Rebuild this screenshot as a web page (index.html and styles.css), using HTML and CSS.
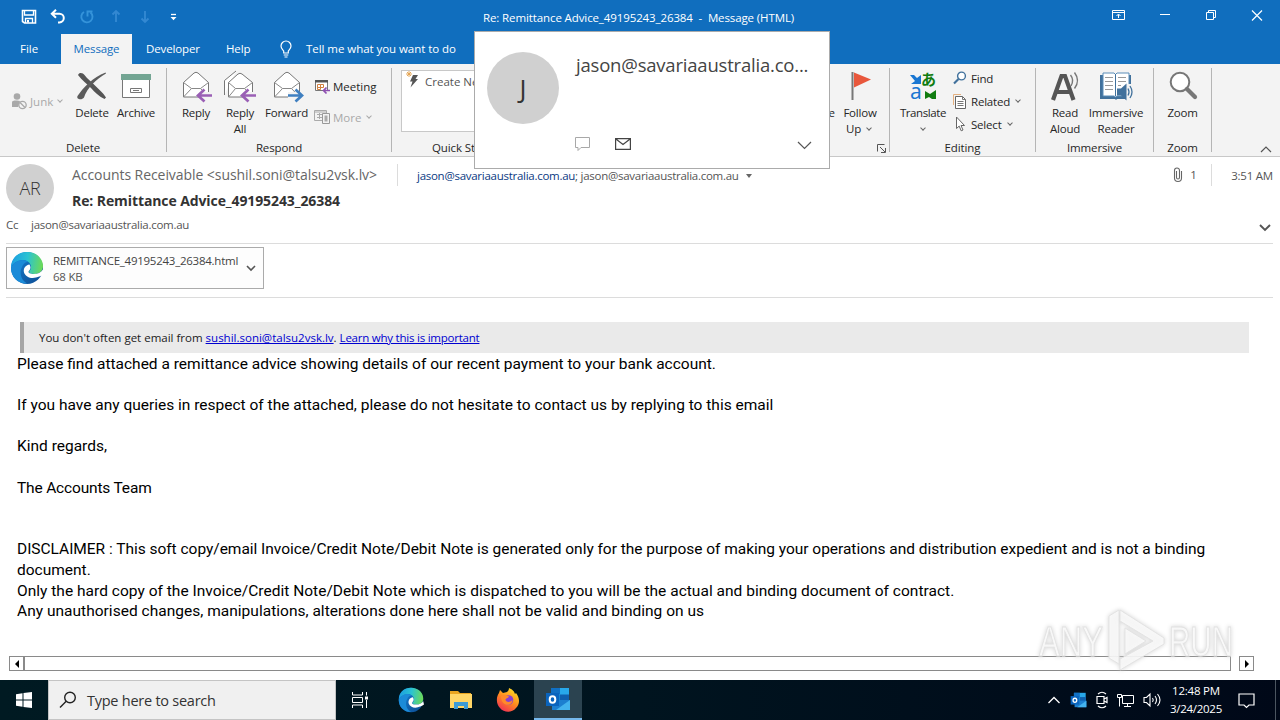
FILE: index.html
```html
<!DOCTYPE html>
<html>
<head>
    <meta charset="UTF-8">
    <title>Re: Remittance Advice_49195243_26384 - Message (HTML)</title>
    <link rel="stylesheet" href="styles.css">
</head>
<body>
    <!-- Title bar -->
    <header class="titlebar">
        <div class="quick">
            <svg width="16" height="16" viewBox="0 0 16 16"><path d="M1.500 1.500h13V14H3.500L1.500 12.500z" fill="none" stroke="#fff" stroke-width="1.600"/><path d="M3.500 1.500V6h9V1.500M4.500 14V9.500h7V14" fill="none" stroke="#fff" stroke-width="1.300"/><path d="M6 11h2v2.500H6z" fill="#fff"/></svg>
            <svg width="16" height="16" viewBox="0 0 16 16"><path d="M6 .800 1.800 4.800l4.200 4M2.300 4.800H9.500a4.200 4.200 0 0 1 0 8.600H8" fill="none" stroke="#fff" stroke-width="2"/></svg>
            <svg width="16" height="16" viewBox="0 0 16 16"><path d="M5 3A5.600 5.600 0 1 0 11.500 3.500M8.500 7.500V2.500h5" fill="none" stroke="#3593da" stroke-width="1.900"/></svg>
            <svg width="16" height="16" viewBox="0 0 16 16"><path d="M8 13V2M4.500 5.500 8 2l3.500 3.500" fill="none" stroke="#3388d2" stroke-width="1.900"/></svg>
            <svg width="16" height="16" viewBox="0 0 16 16"><path d="M8 2v11M4.500 9.500 8 13l3.500-3.500" fill="none" stroke="#3388d2" stroke-width="1.900"/></svg>
            <svg width="16" height="16" viewBox="0 0 16 16"><path d="M5 5.500h5" stroke="#fff" stroke-width="1.300"/><path d="M4.500 8h6l-3 3.200z" fill="#fff"/></svg>
        </div>
        <div class="title">Re: Remittance Advice_49195243_26384&nbsp; -&nbsp; Message (HTML)</div>
        <div class="controls">
            <svg width="14" height="12" viewBox="0 0 14 12"><path d="M.5 .5h12v9H.5zM.5 2.500h12M6.500 8V4.500M4.500 6l2-2 2 2" fill="none" stroke="#fff"/></svg>
            <svg width="12" height="12" viewBox="0 0 12 12"><path d="M1 4.500h10" stroke="#fff"/></svg>
            <svg width="12" height="12" viewBox="0 0 12 12"><path d="M1.500 2.500h7v7h-7zM3.500 2.500v-2h7v7h-2" fill="none" stroke="#fff"/></svg>
            <svg width="12" height="12" viewBox="0 0 12 12"><path d="m1 .500 10 10M11 .500 1 10.500" stroke="#fff" stroke-width="1.200"/></svg>
        </div>
    </header>

    <nav class="tabs">
        <span class="tab tab-file">File</span>
        <span class="tab tab-active">Message</span>
        <span class="tab tab-dev">Developer</span>
        <span class="tab tab-help">Help</span>
        <svg width="14" height="18" viewBox="0 0 14 18"><path d="M4.700 13v-2C3.500 9.500 2 8.500 2 6a5 5 0 0 1 10 0c0 2.500-1.500 3.500-2.700 5v2zM4.700 15h4.600M5.500 17h3" fill="none" stroke="#fff" stroke-width="1.200"/></svg>
        <span class="tell">Tell me what you want to do</span>
    </nav>

    <!-- Ribbon -->
    <section class="ribbon">
        <div class="group group-delete">
            <div class="tools">
                <div class="junk">
                    <svg width="17" height="17" viewBox="0 0 17 17"><circle cx="6" cy="3.500" r="3.300" fill="#a9a9a9"/><path d="M1 14V9.500C1 8 2 7.500 6 7.500l3 .5-2 6z" fill="#a9a9a9"/><circle cx="11.500" cy="12" r="3.700" fill="#f3f3f3" stroke="#a9a9a9" stroke-width="1.300"/><path d="m9 9.500 5 5" stroke="#a9a9a9" stroke-width="1.300"/></svg>
                    <span>Junk</span><i class="caret pale"></i>
                </div>
                <div class="big w-delete">
                    <svg width="32" height="32" viewBox="0 0 32 32"><path d="M2 5c1-3 5-2.500 6.500 0 3 4 6 6 10 10 4 4 8.500 7.500 11.500 12.500l-1.500 1.500c-6-3-9.500-6.500-13.500-11C11 14 6 10.500 2 5z" fill="#555"/><path d="M30 3.500C20.500 9 11 18 8 27.500 6 30.500 0 29.500 1.500 26 7 18 17 7 29.500 2.500z" fill="#5c5c5c"/></svg>
                    <span>Delete</span>
                </div>
                <div class="big w-archive">
                    <svg width="32" height="32" viewBox="0 0 32 32"><path d="M2.500 9.500h27v18h-27z" fill="#fff" stroke="#777"/><path d="M1 4h30v6H1z" fill="#73a593"/><path d="M10.500 18.500h11v4h-11zM13 20.500h6" fill="none" stroke="#777"/></svg>
                    <span>Archive</span>
                </div>
            </div>
            <div class="group-name">Delete</div>
        </div>

        <div class="group group-respond">
            <div class="tools">
                <div class="big w-reply">
                    <svg width="32" height="32" viewBox="0 0 32 32"><path d="M3.500 12.500 14 3q2-1.500 4 0l10.500 9.500V27h-25z" fill="#fff" stroke="#777"/><path d="m3.500 12.500 8 6h9l8-6M3.500 27l8-8.500M28.500 27l-8-8.500" fill="none" stroke="#888"/><path d="M33 22v6H19v-6z" fill="#f3f3f3"/><path d="M32 25.500H19M24.500 19.500l-6.500 6 6.500 6" fill="none" stroke="#9a5fb5" stroke-width="2.700"/></svg>
                    <span>Reply</span>
                </div>
                <div class="big w-replyall">
                    <svg width="32" height="32" viewBox="0 0 32 32"><path d="M.5 25V10.500L12 1M4.500 12.500 14 4q2-1.500 4 0l10.500 8.500V27h-24z" fill="#fff" stroke="#777"/><path d="m4.500 12.500 7 6h9l8-6M4.500 27l7-8.500M28.500 27l-8-8.500" fill="none" stroke="#888"/><path d="M33 22v6H19v-6z" fill="#f3f3f3"/><path d="M32 25.500H19M24.500 19.500l-6.500 6 6.500 6" fill="none" stroke="#9a5fb5" stroke-width="2.700"/></svg>
                    <span>Reply<br>All</span>
                </div>
                <div class="big w-forward">
                    <svg width="32" height="32" viewBox="0 0 32 32"><path d="M3.500 12.500 14 3q2-1.500 4 0l10.500 9.500V27h-25z" fill="#fff" stroke="#777"/><path d="m3.500 12.500 8 6h9l8-6M3.500 27l8-8.500M28.500 27l-8-8.500" fill="none" stroke="#888"/><path d="M17 22h14v6H17z" fill="#f3f3f3"/><path d="M17 25.500h13M24.500 19.500l6.500 6-6.500 6" fill="none" stroke="#3f7fc0" stroke-width="2.700"/></svg>
                    <span>Forward</span>
                </div>
                <div class="smalls respond-smalls">
                    <div class="small">
                        <svg width="16" height="16" viewBox="0 0 16 16"><path d="M1.500 3.500h12v9h-12z" fill="#fff" stroke="#777"/><path d="M1 2h13v2.500H1z" fill="#555"/><path d="M3.500 6.500h3v3h-3zM6.500 6.500h3v3h-3zM3.500 9.500h3v2h-3z" fill="none" stroke="#d07f3e"/><path d="M16 12.500H10M12.500 9.500l-3 3 3 3" fill="none" stroke="#8d4fb0" stroke-width="1.700"/></svg>
                        <span>Meeting</span>
                    </div>
                    <div class="small off">
                        <svg width="16" height="16" viewBox="0 0 16 16"><path d="M.5 1.500h12v10H.5zM.5 3h12M3 5.500h5M3 8.500h5M5.500 4v6" fill="none" stroke="#aaa"/><path d="M8.500 4.500h7v10h-7z" fill="#f3f3f3" stroke="#999"/><path d="M10.500 6.500h3v6h-3z" fill="#aaa"/></svg>
                        <span>More</span><i class="caret pale"></i>
                    </div>
                </div>
            </div>
            <div class="group-name">Respond</div>
        </div>

        <div class="group group-steps">
            <div class="steps">
                <svg width="16" height="18" viewBox="0 0 16 18"><path d="M7 4h5L9.500 8h2.500L4.500 16.500l2-6H4z" fill="#555"/><path d="M3 0v6M0 3h6M1 1l4 4M5 1 1 5" stroke="#e3a04c" stroke-width=".9"/></svg>
                <span>Create New</span>
            </div>
            <div class="group-name">Quick Steps</div>
        </div>

        <div class="group group-tags">
            <div class="tools">
                <div class="big w-categorize"><span>Categorize</span></div>
                <div class="big w-follow">
                    <svg width="32" height="32" viewBox="0 0 32 32"><path d="M8.500 2v28" stroke="#777" stroke-width="2"/><path d="M10 2.500 27 9.500 10 17.500z" fill="#e8573c"/></svg>
                    <span>Follow<br>Up <i class="caret"></i></span>
                </div>
            </div>
            <svg class="launcher" width="9" height="9" viewBox="0 0 9 9"><path d="M.5 7.500v-7h7M3 3l5 5M8.500 4v4.500H4" fill="none" stroke="#555"/></svg>
        </div>

        <div class="group group-editing">
            <div class="tools">
                <div class="big w-translate">
                    <svg width="32" height="32" viewBox="0 0 32 32"><path d="M3 5h4l3 3 4-3v9H4l4-3z" fill="#1976d2"/><path d="M29 20v9h-4l-3-2-4 2v-8l5 3z" fill="#107c10"/><text x="3" y="29" class="glyph-a">a</text><text x="14" y="15" class="glyph-jp">あ</text></svg>
                    <span>Translate<br><i class="caret"></i></span>
                </div>
                <div class="smalls editing-smalls">
                    <div class="small">
                        <svg width="16" height="16" viewBox="0 0 16 16"><circle cx="9.500" cy="6" r="3.900" fill="#fff" stroke="#41719c" stroke-width="1.400"/><path d="m6.500 9-4.500 4.500" stroke="#41719c" stroke-width="2.200"/></svg>
                        <span>Find</span>
                    </div>
                    <div class="small">
                        <svg width="16" height="16" viewBox="0 0 16 16"><path d="M1.500 12V1.500H9" fill="none" stroke="#e5b180"/><path d="M3.500 3.500h7l3 3v9h-10z" fill="#fff" stroke="#666"/><path d="M10.500 3.500v3h3M5.500 8.500h6M5.500 10.500h6M5.500 12.500h6" fill="none" stroke="#777"/></svg>
                        <span>Related</span><i class="caret"></i>
                    </div>
                    <div class="small">
                        <svg width="16" height="16" viewBox="0 0 16 16"><path d="M4.500 1v11.500l2.700-2.400 2 4.700 1.800-.8-2-4.500h3.500z" fill="#fff" stroke="#666"/></svg>
                        <span>Select</span><i class="caret"></i>
                    </div>
                </div>
            </div>
            <div class="group-name">Editing</div>
        </div>

        <div class="group group-immersive">
            <div class="tools">
                <div class="big w-aloud">
                    <svg width="32" height="32" viewBox="0 0 32 32"><path d="m4 30 8.500-24h3.500l8.500 24M8 22h13" fill="none" stroke="#555" stroke-width="4.200"/><path d="M21.500 5q4 5 .5 11M25.500 2.500q6 8 0 16" fill="none" stroke="#777" stroke-width="1.400"/></svg>
                    <span>Read<br>Aloud</span>
                </div>
                <div class="big w-reader">
                    <svg width="34" height="32" viewBox="0 0 34 32"><path d="M1 5h31v24H18l-1 1-1-1H1z" fill="#41719c"/><path d="M4 3h11l1.500 1.500L18 3h12v23H18l-1.500 1L15 26H4z" fill="#fff" stroke="#5b8db8"/><path d="M16.500 4v22" stroke="#41719c"/><path d="M6 7.500h8M6 11.500h8M6 15.500h8M6 19.500h8M19 7.500h8M19 11.500h8M19 15.500h3" stroke="#999"/><path d="M27 14h7v16h-7z" fill="#f3f3f3"/><path d="M18 18.500h4l5.500-5v17l-5.500-5h-4z" fill="#41719c"/><path d="M29 18.500q2 3.500 0 7M31 16q4 6 0 12" fill="none" stroke="#41719c" stroke-width="1.300"/></svg>
                    <span>Immersive<br>Reader</span>
                </div>
            </div>
            <div class="group-name">Immersive</div>
        </div>

        <div class="group group-zoom">
            <div class="tools">
                <div class="big w-zoom">
                    <svg width="32" height="32" viewBox="0 0 32 32"><circle cx="13" cy="12" r="9.300" fill="#fff" stroke="#777" stroke-width="2"/><path d="m20 19 8 8" stroke="#777" stroke-width="4.200" stroke-linecap="round"/></svg>
                    <span>Zoom</span>
                </div>
            </div>
            <div class="group-name">Zoom</div>
        </div>
        <svg class="collapse" width="12" height="7" viewBox="0 0 12 7"><path d="m1 6 5-5 5 5" fill="none" stroke="#555" stroke-width="1.200"/></svg>
    </section>

    <!-- Message header -->
    <section class="head">
        <div class="head-row">
            <div class="avatar">AR</div>
            <div class="who">
                <div class="from-line">
                    <span class="sender">Accounts Receivable &lt;sushil.soni@talsu2vsk.lv&gt;</span>
                    <span class="to"><b>jason@savariaaustralia.com.au</b>; jason@savariaaustralia.com.au<i class="drop"></i></span>
                </div>
                <div class="subject">Re: Remittance Advice_49195243_26384</div>
            </div>
            <div class="meta">
                <svg width="10" height="16" viewBox="0 0 10 16"><path d="M3.500 4v6.500a1.500 1.500 0 0 0 3 0V3.500a2.500 2.500 0 0 0-5 0V11a3.500 3.500 0 0 0 7 0V4" fill="none" stroke="#666" stroke-width="1.100"/></svg>
                <span class="count">1</span>
                <span class="when">3:51 AM</span>
            </div>
        </div>
        <div class="cc">
            <span class="cc-label">Cc</span><span>jason@savariaaustralia.com.au</span>
            <svg width="12" height="8" viewBox="0 0 12 8"><path d="m1 1 5 5 5-5" fill="none" stroke="#555" stroke-width="1.900"/></svg>
        </div>
    </section>

    <section class="attachments">
        <div class="file">
            <svg width="34" height="34" viewBox="0 0 34 34">
                <defs>
                    <linearGradient id="top" x1="0" y1=".4" x2="1" y2=".5"><stop offset="0" stop-color="#1b9de2"/><stop offset=".5" stop-color="#2bc3d2"/><stop offset="1" stop-color="#6ddb55"/></linearGradient>
                    <linearGradient id="low" x1="0" y1="0" x2="1" y2="1"><stop offset="0" stop-color="#1686d9"/><stop offset="1" stop-color="#0c4a91"/></linearGradient>
                    <g id="edge">
                        <circle cx="17" cy="17" r="16" fill="url(#low)"/>
                        <path d="M1 17C1 7 8 1 17 1c10 0 16 7 16 14 0 6-5 8-9 8-3 0-5-1-5-2s2-2 2-5c0-4-4-7-8-7C7 9 2 13 1 17z" fill="url(#top)"/>
                        <path d="M12 16c-2 3-3 12 5 16.500C8 33 1 26 1 17c2-5 7-8 12-8 2 0 4 1 5 2-3 0-5 2-6 5z" fill="#1b8bd8"/>
                        <path d="M19.500 13.500c-4 .5-6.500 4-5.500 8 1.500 4.500 7 6.500 12 5 2.500-.7 4.500-1.500 5.500-2l2.500-1.500-1-4.500c-2 3-5.500 4.500-9 4.500-4 0-5.500-1-5.500-2.200 0-1 2-2 2-4.300 0-1-.4-2-1-3z" class="edge-cut"/>
                    </g>
                </defs>
                <use href="#edge"/>
            </svg>
            <div class="file-text"><span class="file-name">REMITTANCE_49195243_26384.html</span><span class="file-size">68 KB</span></div>
            <svg width="10" height="7" viewBox="0 0 10 7"><path d="m1 1 4 4 4-4" fill="none" stroke="#555" stroke-width="1.600"/></svg>
        </div>
    </section>

    <!-- Message body -->
    <main class="mail">
        <div class="notice">You don't often get email from <a>sushil.soni@talsu2vsk.lv</a>. <a class="learn">Learn why this is important</a></div>
        <div class="text">
            Please find attached a remittance advice showing details of our recent payment to your bank account.<br><br>
            If you have any queries in respect of the attached, please do not hesitate to contact us by replying to this email<br><br>
            Kind regards,<br><br>
            <span class="team">The Accounts Team</span><br><br><br>
            <span class="disclaimer">DISCLAIMER : This soft copy/email Invoice/Credit Note/Debit Note is generated only for the purpose of making your operations and distribution expedient and is not a binding</span><br>
            document.<br>
            <span class="terms">Only the hard copy of the Invoice/Credit Note/Debit Note which is dispatched to you will be the actual and binding document of contract.<br>
            Any unauthorised changes, manipulations, alterations done here shall not be valid and binding on us</span>
        </div>
        <div class="scroll">
            <span class="scroll-btn"><i class="left"></i></span>
            <span class="scroll-track"></span>
            <span class="scroll-btn scroll-end"><i class="right"></i></span>
        </div>
    </main>

    <!-- Taskbar -->
    <footer class="taskbar">
        <svg class="start" width="16" height="16" viewBox="0 0 16 16"><path d="m0 2.200 6.500-.9v6.200H0zM7.500 1.100 16 0v7.500H7.500zM0 8.500h6.500v6.200L0 13.800zM7.500 8.500H16V16l-8.500-1.100z" fill="#fff"/></svg>
        <div class="search">
            <svg width="18" height="18" viewBox="0 0 18 18"><circle cx="11" cy="6.500" r="5.300" fill="none" stroke="#222" stroke-width="1.400"/><path d="m7.200 10.300-6.200 6.200" stroke="#222" stroke-width="1.400"/></svg>
            <span>Type here to search</span>
        </div>
        <div class="apps">
            <div class="app app-view"><svg width="18" height="16" viewBox="0 0 18 16"><path d="M1.500 0v3M11.500 0v3M1.500 3h10M1.500 5.500h10v5h-10zM1.500 13h10M1.500 13v3M11.500 13v3M15.500 0v3.500M15.500 8v8" fill="none" stroke="#fff"/><path d="M14 4.500h3v3h-3z" fill="#fff"/></svg></div>
            <div class="app app-edge"><svg width="26" height="26" viewBox="0 0 34 34"><use href="#edge"/></svg></div>
            <div class="app app-files"><svg width="22" height="20" viewBox="0 0 22 20"><path d="M0 1h8l2 2h11v4H0z" fill="#e9a520"/><path d="M0 4h22v14H0z" fill="#ffd667"/><path d="M4 19v-7h14v7h-4v-3H8v3z" fill="#3c9bd6"/></svg></div>
            <div class="app"><svg width="24" height="24" viewBox="0 0 24 24">
                <defs><linearGradient id="fox" x1=".8" y1="0" x2=".2" y2="1"><stop offset="0" stop-color="#ffe226"/><stop offset=".5" stop-color="#ff8a1f"/><stop offset="1" stop-color="#f0295a"/></linearGradient></defs>
                <path d="M3 5 4 2l3 3 4-1c1-1 2-2 2-4 4 2 5 3 6 6l1-1c4 5 4 11 0 15-4 5-12 5-16 0C0 16 0 9 3 5z" fill="url(#fox)"/><circle cx="12.500" cy="12" r="4.800" fill="#8a3fd0"/><path d="M5 8c3-2 6-.5 8 .5-1 2-3.500 1.500-3.500 3.500 1 2.500 4.500 2.500 7 0 0 7-11.500 7-11.500-4z" fill="#ff8a2a"/></svg></div>
            <div class="app app-on"><svg width="26" height="24" viewBox="0 0 26 24">
                <g id="outlook"><path d="M6 1h18v13H6z" fill="#28a8ea"/><path d="M6 1h9v6.500H6z" fill="#1070c4"/><path d="M15 7.500h9V14h-9z" fill="#0f5fae"/><path d="M6 7.500h9V14H6z" fill="#1482cf"/><path d="M7 13h18v10H7z" fill="#1c7fd0"/><path d="m25 13-14 10h14z" fill="#43b3ee"/><path d="M1 6h13v13H1z" fill="#0a64bd"/><ellipse cx="7.500" cy="12.500" rx="2.800" ry="3.200" fill="none" stroke="#fff" stroke-width="2"/></g></svg></div>
        </div>
        <div class="tray">
            <svg width="14" height="8" viewBox="0 0 14 8"><path d="m1.500 7 5.500-5.500L12.500 7" fill="none" stroke="#fff" stroke-width="1.300"/></svg>
            <svg width="17" height="16" viewBox="0 0 26 24"><use href="#outlook"/></svg>
            <svg width="12" height="18" viewBox="0 0 12 18"><path d="M1 5.500h7v7H1zM8 8l3-1.500v5L8 10M2 3q4-3.500 8 0M2 15q4 3.500 8 0" fill="none" stroke="#fff" stroke-width="1.200"/></svg>
            <svg width="17" height="15" viewBox="0 0 17 15"><path d="M5.500 2.500h11v8h-11zM.5 1.500h4v3h-4zM2.500 4.500v9M7 13.500h7M10.500 10.500v3" fill="none" stroke="#fff"/></svg>
            <svg width="18" height="14" viewBox="0 0 18 14"><path d="M1 4.500h2.500L7 1v12L3.500 9.500H1zM9.500 5q1.500 2 0 4M12 3q3 4 0 8M14.500 1q5 6 0 12" fill="none" stroke="#fff" stroke-width="1.100"/></svg>
        </div>
        <div class="clock"><span>12:48 PM</span><span class="date">3/24/2025</span></div>
        <svg class="bell" width="17" height="16" viewBox="0 0 17 16"><path d="M1 1h15v11h-5l-2.500 2.500L6 12H1z" fill="none" stroke="#fff" stroke-width="1.200"/></svg>
        <i class="peek"></i>
    </footer>

    <!-- Contact card over the ribbon -->
    <aside class="card">
        <div class="card-top">
            <div class="card-avatar">J</div>
            <div class="card-name">jason@savariaaustralia.co...</div>
        </div>
        <div class="card-actions">
            <svg width="15" height="14" viewBox="0 0 15 14"><path d="M.5.5h14v10H6l-3 3v-3H.5z" fill="none" stroke="#a8a8a8"/></svg>
            <svg width="16" height="12" viewBox="0 0 16 12"><path d="M.6.6h14.800v10.800H.6zM.6.8 8 6.500 15.400.8" fill="none" stroke="#444" stroke-width="1.200"/></svg>
            <svg class="card-more" width="15" height="9" viewBox="0 0 15 9"><path d="m1 1 6.500 6.500L14 1" fill="none" stroke="#555" stroke-width="1.200"/></svg>
        </div>
    </aside>

    <svg class="watermark" width="204" height="66" viewBox="0 0 204 66">
        <text x="3" y="49" textLength="64" lengthAdjust="spacingAndGlyphs">ANY</text>
        <path d="M73 9v42l10 6V3z"/>
        <path d="M84 3 128 31v6L84 63V52l33-18-33-20z"/>
        <path d="M89 21v26l21-13z"/>
        <text x="133" y="49" textLength="64" lengthAdjust="spacingAndGlyphs">RUN</text>
    </svg>
</body>
</html>
```

FILE: styles.css
```css
* {
    box-sizing: border-box;
}
body {
    margin: 0;
    width: 1280px;
    height: 720px;
    overflow: hidden;
    position: relative;
    display: flex;
    flex-direction: column;
    background-color: #fff;
    color: #262626;
    font-family: "Open Sans", "Noto Sans", sans-serif;
    font-size: 11.5px;
    letter-spacing: -0.22px;
}
svg {
    display: block;
    flex: none;
    overflow: visible;
}

/* title bar and tabs */
.titlebar {
    height: 34px;
    flex: none;
    display: flex;
    background-color: #106ebe;
    color: #fff;
}
.quick {
    display: flex;
    gap: 13px;
    padding: 9px 0 0 21px;
    width: 483px;
}
.title {
    width: 629px;
    padding-top: 9px;
    line-height: 18px;
    letter-spacing: -0.11px;
    white-space: nowrap;
}
.controls {
    display: flex;
    padding: 10px 0 0 0;
    gap: 34px;
}
.controls svg:first-child {
    margin-right: -1px;
}
.tabs {
    height: 30px;
    flex: none;
    display: flex;
    align-items: center;
    background-color: #106ebe;
    color: #fff;
    white-space: nowrap;
}
.tab {
    line-height: 30px;
    letter-spacing: -0.14px;
}
.tab-file {
    width: 61px;
    padding-left: 20px;
    letter-spacing: 0;
}
.tab-active {
    width: 71px;
    background-color: #f3f3f3;
    color: #106ebe;
    text-align: center;
}
.tab-dev {
    width: 94px;
    padding-left: 14px;
}
.tab-help {
    width: 53px;
}
.tell {
    padding: 0 0 1px 7px;
    letter-spacing: -0.05px;
}
.tabs svg {
    margin-right: 6px;
}

/* ribbon */
.ribbon {
    height: 93px;
    flex: none;
    display: flex;
    background-color: #f3f3f3;
    border-bottom: 1px solid #c8c8c8;
    padding: 4px 0;
}
.group {
    height: 84px;
    display: flex;
    flex-direction: column;
    justify-content: space-between;
    border-right: 1px solid #b5b5b5;
}
.group-delete { width: 167px; }
.group-respond { width: 225px; }
.group-steps { width: 225px; }
.group-tags {
    width: 273px;
    align-items: flex-end;
}
.group-editing { width: 146px; }
.group-immersive { width: 118px; }
.group-zoom { width: 58px; }
.tools {
    display: flex;
}
.group-name {
    line-height: 16px;
    margin-bottom: -4px;
    text-align: center;
    letter-spacing: -0.12px;
}
.group-steps .group-name {
    text-align: left;
    padding-left: 40px;
}
.big {
    display: flex;
    flex-direction: column;
    align-items: center;
    padding-top: 2px;
    gap: 3px;
    line-height: 16px;
    text-align: center;
    white-space: nowrap;
}
.w-delete { width: 46px; }
.w-archive { width: 42px; }
.w-reply { width: 44px; margin-left: 7px; }
.w-replyall { width: 44px; }
.w-forward { width: 49px; }
.w-categorize {
    width: 57px;
    padding-top: 37px;
}
.w-follow { width: 48px; margin-right: 5px; }
.w-translate { width: 56px; margin-left: 5px; letter-spacing: -0.4px; }
.w-aloud { width: 48px; margin-left: 5px; }
.w-reader { width: 54px; }
.w-zoom { width: 57px; }
.junk {
    width: 69px;
    padding: 24px 0 0 11px;
    height: 42px;
    display: flex;
    align-items: center;
    gap: 2px;
    color: #a9a9a9;
    letter-spacing: 0;
}
.caret {
    display: inline-block;
    width: 4px;
    height: 4px;
    border: solid #666;
    border-width: 0 1px 1px 0;
    transform: rotate(45deg);
    margin: 0 3px 3px 3px;
    flex: none;
}
.pale {
    border-color: #a9a9a9;
}
.smalls {
    display: flex;
    flex-direction: column;
}
.respond-smalls {
    padding: 10px 0 0 3px;
    gap: 15px;
    letter-spacing: 0;
}
.editing-smalls {
    padding: 2px 0 0 1px;
    gap: 7px;
    letter-spacing: -0.2px;
}
.small {
    display: flex;
    align-items: center;
    gap: 3px;
    height: 16px;
}
.off {
    color: #a9a9a9;
}
.steps {
    height: 62px;
    margin: 2px 0 0 9px;
    padding: 0 0 0 4px;
    display: flex;
    gap: 3px;
    background-color: #fff;
    border: 1px solid #c8c8c8;
    color: #555;
    line-height: 22px;
    letter-spacing: 0;
}
.launcher {
    margin: 0 3px -1px 0;
}
.glyph-a {
    font: 21px "Noto Sans", sans-serif;
    fill: #1976d2;
}
.glyph-jp {
    font: bold 15px "Noto Sans CJK JP", sans-serif;
    fill: #107c10;
}
.collapse {
    margin: 78px 8px 0 auto;
}

/* message header */
.head {
    height: 87px;
    flex: none;
    margin: 0 7px 0 6px;
    padding-top: 7px;
    border-bottom: 1px solid #dcdcdc;
    color: #555;
}
.head-row {
    display: flex;
}
.avatar {
    width: 48px;
    height: 48px;
    border-radius: 50%;
    background-color: #d0d0d0;
    color: #333;
    font-size: 18px;
    font-weight: 300;
    line-height: 48px;
    text-align: center;
}
.who {
    flex: 1;
    padding-left: 18px;
}
.from-line {
    display: flex;
    height: 22px;
    line-height: 22px;
}
.sender {
    width: 326px;
    font-size: 14px;
    letter-spacing: -0.065px;
    border-right: 1px solid #dcdcdc;
    color: #666;
}
.to {
    padding: 2px 0 0 19px;
    line-height: 20px;
    letter-spacing: -0.27px;
    white-space: nowrap;
}
.to b {
    font-weight: normal;
    color: #0b3a82;
}
.drop {
    display: inline-block;
    margin: 0 0 2px 7px;
    border: 3px solid transparent;
    border-top: 4px solid #666;
    border-bottom: 0;
}
.subject {
    font-size: 14px;
    font-weight: bold;
    line-height: 20px;
    padding-top: 5px;
    letter-spacing: -0.095px;
    color: #333;
}
.meta {
    display: flex;
    align-items: center;
    height: 22px;
}
.count {
    width: 29px;
    padding-left: 7px;
    line-height: 22px;
    border-right: 1px solid #dcdcdc;
}
.when {
    padding-left: 19px;
}
.cc {
    display: flex;
    align-items: center;
    height: 22px;
    margin-top: 1px;
    letter-spacing: -0.27px;
}
.cc-label {
    width: 25px;
}
.cc svg {
    margin: 7px 2px 0 auto;
}

/* attachment */
.attachments {
    height: 54px;
    flex: none;
    margin: 0 7px 0 6px;
    padding-top: 3px;
    border-bottom: 1px solid #dcdcdc;
}
.file {
    width: 258px;
    height: 42px;
    display: flex;
    align-items: center;
    border: 1px solid #ababab;
    background-color: #fdfdfd;
    padding-left: 3px;
}
.file-text {
    display: flex;
    flex-direction: column;
    width: 201px;
    padding: 2px 0 0 9px;
    margin-right: 1px;
    line-height: 16px;
    color: #444;
    letter-spacing: -0.25px;
    white-space: nowrap;
}
.file-size {
    color: #555;
}
.edge-cut {
    fill: #fff;
}

/* mail body */
.mail {
    height: 382px;
    flex: none;
    padding: 24px 0 0 17px;
    color: #000;
}
.notice {
    width: 1229px;
    height: 31px;
    margin-left: 3px;
    padding-left: 15px;
    line-height: 32px;
    border-left: 4px solid #a6a6a6;
    background-color: #eaeaea;
    color: #212121;
    letter-spacing: 0;
}
.notice a {
    color: #0000d0;
    text-decoration: underline;
}
.notice .learn {
    letter-spacing: -0.23px;
}
.text {
    height: 303px;
    padding-top: 1px;
    font-family: Roboto, sans-serif;
    font-size: 15.5px;
    line-height: 20.6px;
    letter-spacing: 0;
    white-space: nowrap;
}
.team {
    letter-spacing: -0.17px;
}
.disclaimer {
    letter-spacing: -0.026px;
}
.terms {
    letter-spacing: 0.02px;
}
.scroll {
    display: flex;
    height: 15px;
    margin-left: -8px;
}
.scroll-btn {
    width: 15px;
    display: flex;
    align-items: center;
    justify-content: center;
    border: 1px solid #8a8a8a;
}
.scroll-track {
    width: 1207px;
    border: 1px solid #8a8a8a;
}
.scroll-end {
    margin-left: 8px;
}
.left, .right {
    border: 4px solid transparent;
}
.left {
    border-left: 0;
    border-right-color: #000;
}
.right {
    border-right: 0;
    border-left-color: #000;
}

/* taskbar */
.taskbar {
    height: 40px;
    flex: none;
    display: flex;
    align-items: center;
    background: linear-gradient(90deg, #001a22, #00141f 50%, #000818);
    color: #fff;
}
.start {
    margin: 0 16px;
}
.search {
    width: 288px;
    height: 40px;
    display: flex;
    align-items: center;
    gap: 10px;
    padding-left: 10px;
    background-color: #f0f0f0;
    border: 1px solid #c4c4c4;
    color: #333;
    font-size: 14.5px;
    letter-spacing: -0.25px;
}
.apps {
    display: flex;
}
.app {
    width: 48px;
    height: 40px;
    display: flex;
    align-items: center;
    justify-content: center;
}
.app-edge {
    width: 54px;
}
.app-files {
    width: 46px;
}
.app-edge .edge-cut {
    fill: #00161f;
}
.app-on {
    margin-left: 2px;
    background-color: #2b4350;
    border-bottom: 2px solid #76b9ed;
}
.tray {
    display: flex;
    align-items: center;
    gap: 9px;
    margin-left: auto;
}
.clock {
    display: flex;
    flex-direction: column;
    align-items: center;
    width: 70px;
    line-height: 18px;
}
.date {
    letter-spacing: -0.29px;
}
.bell {
    margin: 2px 20px 0 7px;
}
.peek {
    width: 5px;
    height: 40px;
    border-left: 1px solid #4b5560;
}

/* contact card */
.card {
    position: absolute;
    left: 474px;
    top: 31px;
    width: 356px;
    height: 138px;
    padding: 20px 16px 0 12px;
    background-color: #fff;
    border: 1px solid #ababab;
}
.card-top {
    display: flex;
    gap: 17px;
}
.card-avatar {
    width: 72px;
    height: 72px;
    border-radius: 50%;
    background-color: #d0d0d0;
    color: #333;
    font-size: 26px;
    line-height: 72px;
    text-align: center;
}
.card-name {
    font-size: 18.5px;
    line-height: 26px;
    letter-spacing: -0.2px;
    color: #444;
}
.card-actions {
    display: flex;
    align-items: center;
    margin-top: 13px;
    padding-left: 88px;
    gap: 25px;
}
.card-more {
    margin: 2px 1px 0 auto;
}

.watermark {
    position: absolute;
    left: 1036px;
    top: 607px;
    fill: #fff;
    fill-opacity: 0.75;
    stroke: #e3e3e3;
    stroke-width: 1px;
    filter: drop-shadow(0 0 2px #ccc);
}
.watermark text {
    font: 42px "Liberation Sans", sans-serif;
    letter-spacing: 0;
}
```
